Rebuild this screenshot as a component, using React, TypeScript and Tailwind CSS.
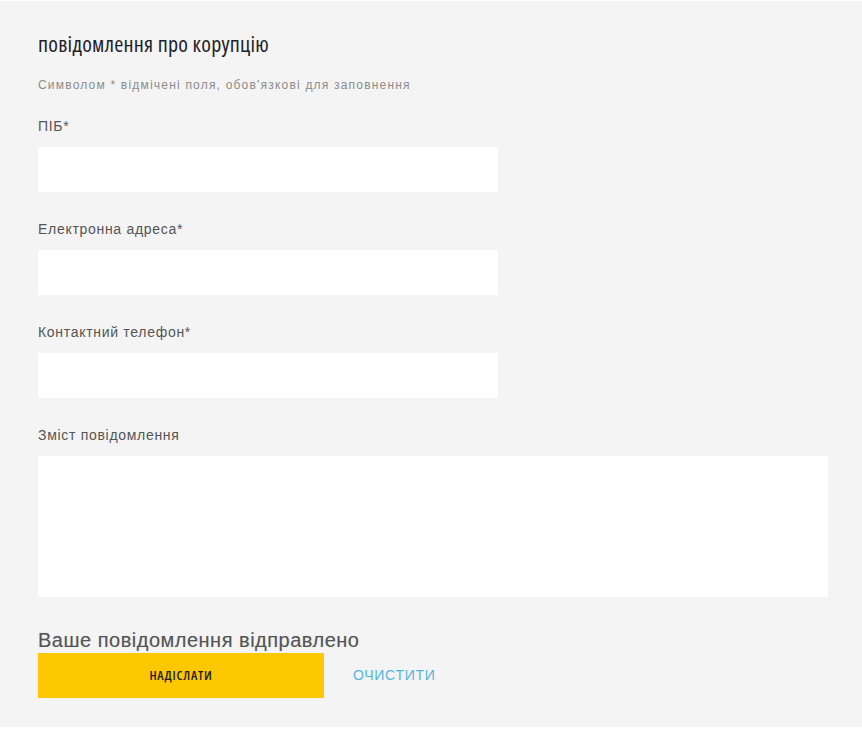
function Field({ label, tall }: { label: string; tall?: boolean }) {
  return (
    <div className="flex flex-col">
      <label className="h-5 text-[14px] leading-5 text-[#555555] tracking-[0.7px] mb-[11px]">{label}</label>
      {tall ? (
        <textarea className="block h-[141px] w-[790px] bg-white resize-none outline-none border-0" />
      ) : (
        <input className="block h-[45px] w-[460px] bg-white outline-none border-0" />
      )}
    </div>
  );
}

export default function App() {
  return (
    <div className="bg-white pt-px font-['Liberation_Sans',Arial,sans-serif]">
      <div className="bg-[#f4f4f4] pl-[38px] pt-[27px] pb-[29px]">
        <h1 className="h-[30px] text-[22px] leading-[30px] tracking-[0.25px] text-[#1f2229] font-['Open_Sans',sans-serif] [font-stretch:condensed]">
          повідомлення про корупцію
        </h1>
        <p className="mt-[19px] h-4 text-[12px] leading-4 text-[#8c8c8c] tracking-[1.2px]">
          Символом * відмічені поля, обов'язкові для заповнення
        </p>
        <div className="mt-[23px] flex flex-col gap-[27px]">
          <Field label="ПІБ*" />
          <Field label="Електронна адреса*" />
          <Field label="Контактний телефон*" />
          <Field label="Зміст повідомлення" tall />
        </div>
        <div className="mt-[31px] h-6 text-[20px] leading-6 tracking-[0.5px] text-[#555555] [text-shadow:0_0_1px_rgba(0,0,0,0.2)]">
          Ваше повідомлення відправлено
        </div>
        <div className="mt-px flex items-center">
          <button className="h-[45px] w-[286px] bg-[#fec800] text-[13px] font-semibold tracking-[0.8px] text-[#222222] font-['Open_Sans',sans-serif] [font-stretch:condensed]">
            НАДІСЛАТИ
          </button>
          <button className="ml-[29px] text-[14px] tracking-[0.7px] text-[#55b6dc]">ОЧИСТИТИ</button>
        </div>
      </div>
    </div>
  );
}
